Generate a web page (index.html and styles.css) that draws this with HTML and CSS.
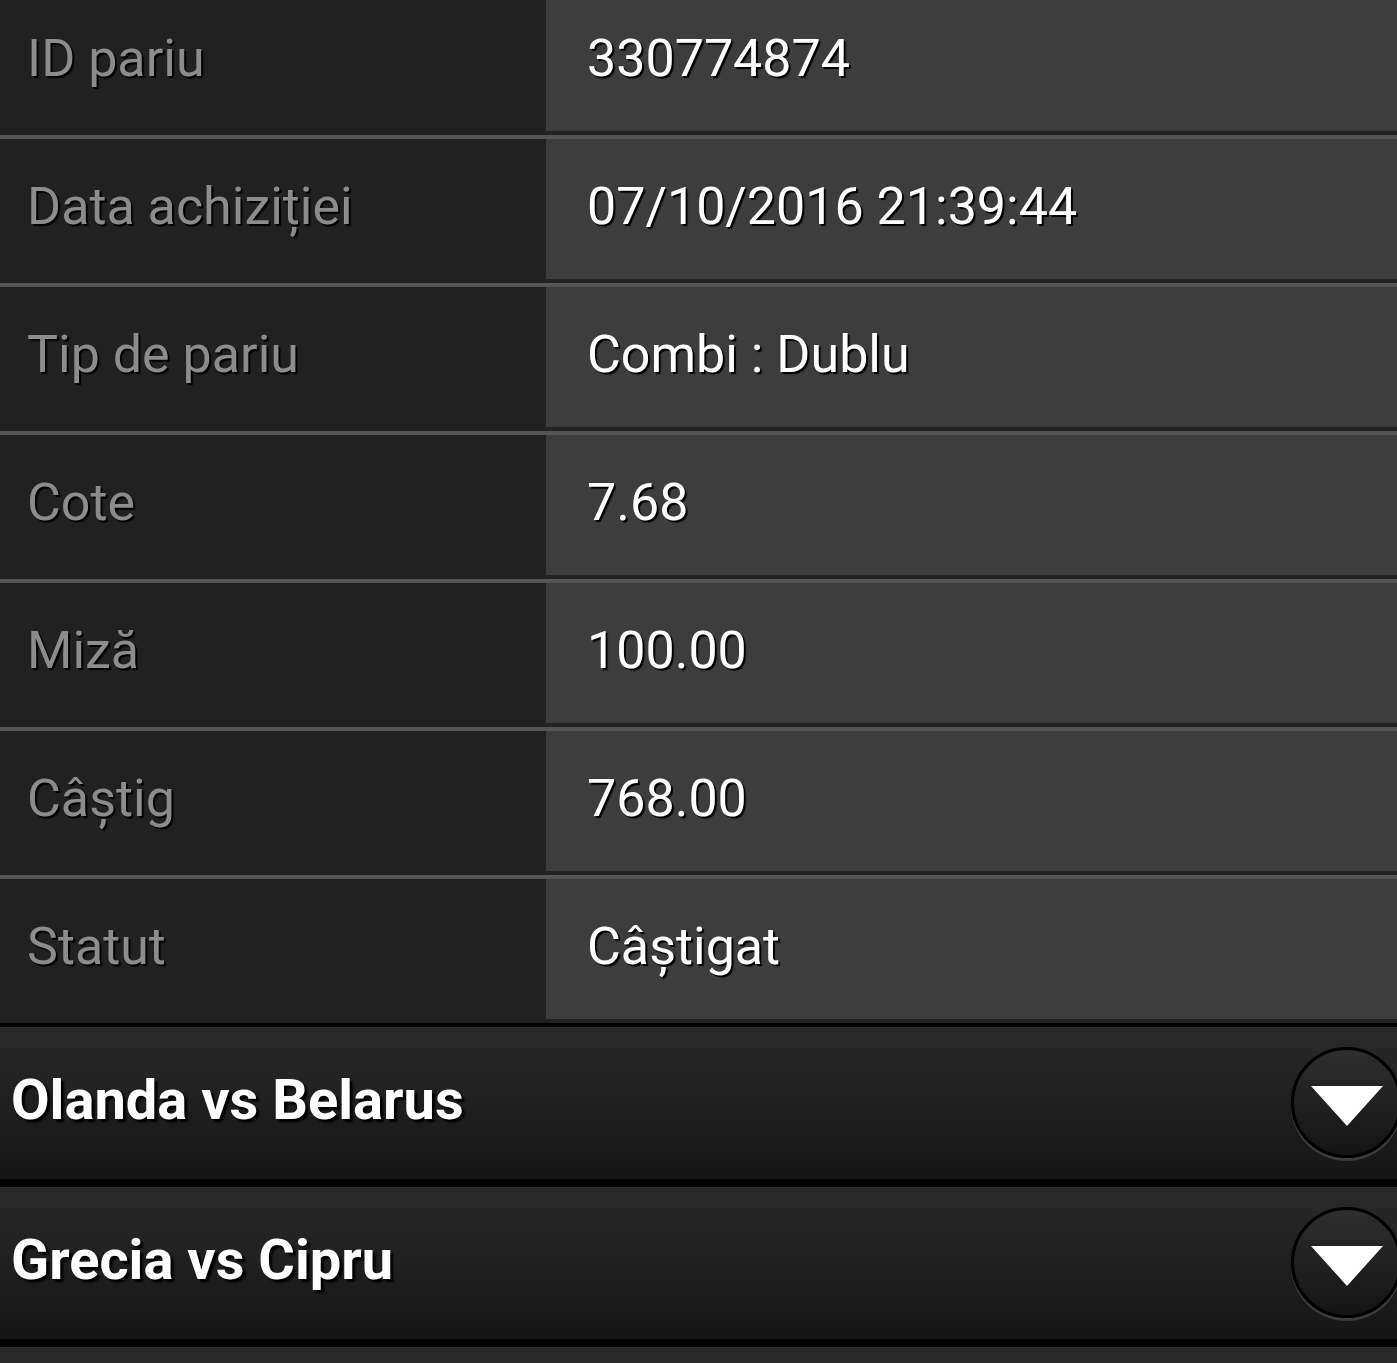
FILE: index.html
```html
<!DOCTYPE html>
<html lang="ro">
<head>
<meta charset="utf-8">
<title>Detalii pariu</title>
<link rel="stylesheet" href="styles.css">
</head>
<body>
<div class="details">
  <div class="row"><div class="label">ID pariu</div><div class="value">330774874</div></div>
  <div class="row"><div class="label">Data achiziției</div><div class="value">07/10/2016 21:39:44</div></div>
  <div class="row"><div class="label">Tip de pariu</div><div class="value">Combi : Dublu</div></div>
  <div class="row"><div class="label">Cote</div><div class="value">7.68</div></div>
  <div class="row"><div class="label">Miză</div><div class="value">100.00</div></div>
  <div class="row"><div class="label">Câștig</div><div class="value">768.00</div></div>
  <div class="row row-last"><div class="label">Statut</div><div class="value">Câștigat</div></div>
</div>
<div class="match">
  <span class="title">Olanda vs Belarus</span>
  <span class="toggle"><svg width="72" height="40" viewBox="0 0 72 40"><polygon points="0,0 72,0 36,40" fill="#fff"/></svg></span>
</div>
<div class="match">
  <span class="title">Grecia vs Cipru</span>
  <span class="toggle"><svg width="72" height="40" viewBox="0 0 72 40"><polygon points="0,0 72,0 36,40" fill="#fff"/></svg></span>
</div>
<div class="match"></div>
</body>
</html>
```
FILE: styles.css
```css
html, body {
  margin: 0;
  padding: 0;
}
body {
  background: #000;
  height: 1363px;
  overflow: hidden;
  font-family: Roboto, "Liberation Sans", sans-serif;
}
.details {
  margin-top: -9px;
}
.row {
  display: flex;
  height: 144px;
  background: #222;
  border-bottom: 4px solid #555;
}
.row-last {
  border-bottom: none;
}
.label {
  width: 519px;
  padding-left: 27px;
  padding-bottom: 10px;
  display: flex;
  align-items: center;
  background: #212121;
  color: #8c8c8c;
  font-size: 52px;
  text-shadow: 2px 2px 1px #000;
}
.value {
  flex: 1;
  margin-bottom: 4px;
  padding-left: 41px;
  padding-bottom: 6px;
  display: flex;
  align-items: center;
  background: #3d3d3d;
  color: #fff;
  font-size: 52px;
  text-shadow: 2px 2px 1px #000;
}
.match {
  display: flex;
  align-items: center;
  justify-content: space-between;
  height: 152px;
  border-top: 4px solid #000;
  border-bottom: 4px solid #000;
  background: linear-gradient(#2a2a2a, #151515);
  overflow: hidden;
}
.title {
  padding-left: 11px;
  padding-bottom: 7px;
  color: #fff;
  font-weight: 700;
  font-size: 56px;
  text-shadow: 3px 3px 2px #000;
}
.toggle {
  width: 105px;
  height: 105px;
  margin-right: -5px;
  margin-bottom: 2px;
  border: 3px solid #000;
  border-radius: 50%;
  background: linear-gradient(#2e2e2e, #141414);
  box-shadow: 0 3px 0 #3c3c3c;
  display: flex;
  align-items: center;
  justify-content: center;
  flex-shrink: 0;
}
.toggle svg {
  display: block;
  margin-top: 8px;
}
```
